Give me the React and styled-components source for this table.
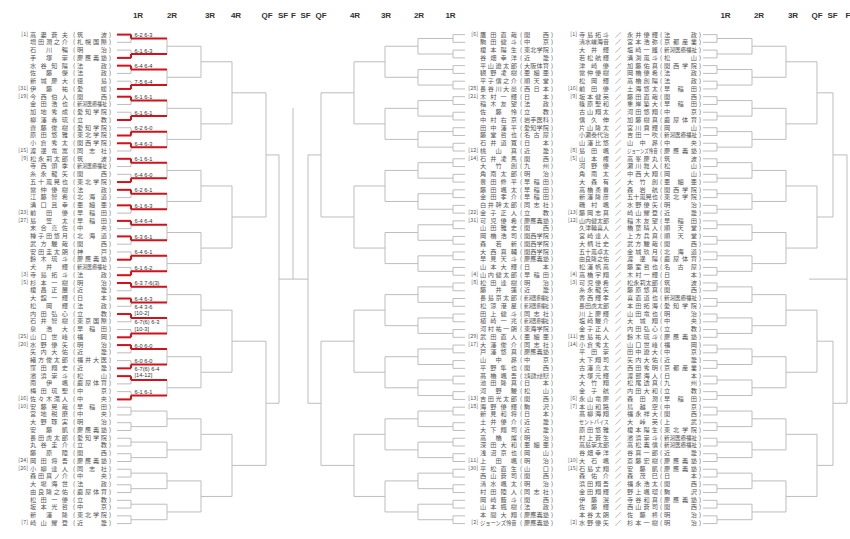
import React from 'react';
import styled, { createGlobalStyle } from 'styled-components';

const ROW = 7.762;
const TOP = 34.6;
const GREY = '#bdbdbd';
const RED = '#d0121b';
const GLYPH = 6.2;

const rowY = (i) => TOP + i * ROW;

const GlobalStyle = createGlobalStyle`
  html, body {
    margin: 0;
    padding: 0;
    background: #fff;
  }
  body {
    font-family: "Noto Sans CJK JP", "Noto Sans", sans-serif;
  }
`;

const Page = styled.div`
  display: flex;
  width: 850px;
  height: 539px;
  overflow: hidden;
  background: #fff;
`;

const NameColumn = styled.div`
  display: flex;
  flex-direction: column;
  flex-shrink: 0;
  box-sizing: border-box;
  width: ${p => p.$width}px;
  padding-top: ${TOP - ROW / 2}px;
  padding-left: ${p => p.$indent}px;
`;

const Row = styled.div`
  display: flex;
  align-items: center;
  height: ${ROW}px;
  line-height: ${ROW}px;
  font-size: ${GLYPH}px;
  color: #555;
  white-space: nowrap;
  overflow: visible;
`;

const Seed = styled.span`
  flex-shrink: 0;
  width: ${p => p.$w}px;
  margin-right: 2px;
  text-align: right;
  font-size: 5.4px;
  color: #555;
`;

const SpreadBox = styled.span`
  display: flex;
  justify-content: space-between;
  flex-shrink: 0;
  width: ${p => p.$w}px;
`;

const Squeezed = styled.span`
  display: inline-block;
  transform-origin: left center;
  transform: scaleX(${p => p.$k});
`;

const Paren = styled.span`
  flex-shrink: 0;
  width: 6px;
  margin-left: ${p => p.$lead || 0}px;
  text-align: center;
`;

const Slash = styled.span`
  flex-shrink: 0;
  width: ${p => p.$w}px;
  text-align: center;
`;

const Chart = styled.svg`
  display: block;
  flex-shrink: 0;
  font-family: "Liberation Sans", Arial, sans-serif;
`;

const Wire = styled.line`
  stroke: ${p => (p.$red ? RED : GREY)};
  stroke-width: ${p => (p.$red ? 2 : 1)};
`;

const RoundLabel = styled.text`
  font-size: 8px;
  font-weight: 700;
  fill: #333;
  text-anchor: middle;
`;

const Score = styled.text`
  font-size: 5.7px;
  fill: #333;
`;

const Spread = ({ text, w }) => {
  const chars = Array.from(text);
  const natural = chars.length * GLYPH;
  if (natural > w) {
    return (
      <SpreadBox $w={w}>
        <Squeezed $k={w / natural}>{text}</Squeezed>
      </SpreadBox>
    );
  }
  return (
    <SpreadBox $w={w}>
      {chars.map((c, i) => <span key={i}>{c}</span>)}
    </SpreadBox>
  );
};

const toSingles = (list) => list.map(([seed, name, school]) => ({ seed, name, school }));

const LEFT = toSingles([
  ['1', '高妻蒼夫', '筑波'], ['', '増田潤之介', '札幌国際'], ['', '石川暢', '明治'], ['', '手塚崇', '慶應義塾'],
  ['', '水谷知陽', '法政'], ['', '佐藤傑', '法政'], ['', '新城慶大', '徳島'], ['31', '伊藤祐', '愛媛'],
  ['19', '今西伯人', '関西'], ['', '金田浩也', '新潟医療福祉'], ['', '加地秀成', '愛知学院'], ['', '柳澤春琉', '立教'],
  ['', '齋藤俊樹', '愛知学院'], ['', '原田悠雅', '東北学院'], ['', '小倉秀太', '関西学院'], ['15', '渡邊竜嵩', '同志社'],
  ['9', '松永莉太郎', '筑波'], ['', '寺西頌季', '新潟医療福祉'], ['', '糸永龍矢', '関西'], ['', '五十嵐晃也', '東北学院'],
  ['', '當仲優樹', '法政'], ['', '江藤智希', '北海道'], ['', '溝口且幸', '亜細亜'], ['23', '前田優', '早稲田'],
  ['27', '島笠太', '早稲田'], ['', '末合亮佐', '中央'], ['', '種子田悠月', '北海道'], ['', '武方駿哉', '関西'],
  ['', '安田圭太朗', '神戸'], ['', '鈴木琉斗', '慶應義塾'], ['', '犬井輝', '新潟医療福祉'], ['3', '寺島拓斗', '法政'],
  ['5', '杉本一樹', '明治'], ['', '榎昌正展', '近畿'], ['', '大舘一輝', '日本'], ['', '松岡輝', '法政'],
  ['', '内田弘心', '立教'], ['', '石井智樹', '東京国際'], ['', '泉浩大', '早稲田'], ['25', '山口世峰', '福岡'],
  ['20', '水野優矢', '明治'], ['', '矢内大佑', '近畿'], ['', '緒方俊太郎', '福井大医'], ['', '窪田翔史', '近畿'],
  ['', '濱浜崇斗', '松山'], ['', '南伊颯', '鹿屋体育'], ['', '梅田琉聖', '中京'], ['16', '佐々木滝人', '中央'],
  ['10', '安藤晃哉', '早稲田'], ['', '宮地税磨', '中央'], ['', '大野琢実', '明治'], ['', '安藤凱', '慶應義塾'],
  ['', '長田虎太郎', '愛知学院'], ['', '丸谷圭介', '立教'], ['', '藤原陸', '関西'], ['24', '岡田将吾', '慶應義塾'],
  ['26', '小柳達人', '同志社'], ['', '森田真ノ介', '中央'], ['', '大場海世', '法政'], ['', '由良隆之佑', '鹿屋体育'],
  ['', '松田一優', '立教'], ['', '坂本光哲', '中京'], ['', '新澤隆', '東北学院'], ['7', '崎山耀登', '近畿'],
]);

const MIDDLE = toSingles([
  ['6', '鷹田直哉', '関西'], ['', '駒田健斗', '中京'], ['', '榎本陽生', '東北学院'], ['', '谷畑幸洋', '近畿'],
  ['', '平山遼太郎', '大阪体育'], ['', '観野凌樹', '亜細亜'], ['', '平子信之介', '順天堂'], ['28', '長谷川大豪', '西日本'],
  ['21', '木村一輝', '日本'], ['', '稲木友望', '法政'], ['', '佐藤怜', '立教'], ['', '中村右京', '岩手医科'],
  ['', '田中澤平', '愛知学院'], ['', '藤堂哲也', '名古屋'], ['', '石井道寛', '日本'], ['12', '桃山真', '近畿'],
  ['14', '石井凌馬', '関西'], ['', '大竹創', '九州'], ['', '角南太郎', '明治'], ['', '豊田修平', '早稲田'],
  ['', '藤田颯太', '早稲田'], ['', '金田孝介', '早稲田'], ['', '白井幹太郎', '同志社'], ['22', '金子正人', '立教'],
  ['31', '可児優希', '慶應義塾'], ['', '山田雅史', '関西'], ['', '岡橋浩司', '関西学院'], ['', '森若新', '関西学院'],
  ['', '大西真輔', '関西学院'], ['', '早見天斗', '慶應義塾'], ['', '山本大輝', '日本'], ['4', '山内健太郎', '早稲田'],
  ['8', '松田達樹', '明治'], ['', '藤井蓮', '近畿'], ['', '長島京太郎', '新潟医療福祉'], ['', '松涼港星', '新潟医療福祉'],
  ['', '田上健斗', '同志社'], ['', '植崎一兆', '新潟医療福祉'], ['', '河村祐一朗', '東海学院'], ['29', '武田直人', '亜細亜'],
  ['17', '大澤俊介', '同志社'], ['', '戸澤悠真', '慶應義塾'], ['', '山中昴', '中京'], ['', '平野隼也', '関西'],
  ['', '髙橋颯吾', '北海道教大岩見沢'], ['', '池田隆真', '日本'], ['', '河野駿', '松山'], ['13', '吉田光太郎', '関西'],
  ['18', '海野優輝', '駒沢'], ['', '新見和将', '日本'], ['', '土井優介', '近畿'], ['', '大下翔司', '近畿'],
  ['', '高橋燦', '明治'], ['', '深田大和', '亜細亜'], ['', '浅沼京也', '岡山'], ['11', '上田颯', '明治'],
  ['30', '平松直生', '山口'], ['', '西山蒼司', '関西'], ['', '清水颯太', '明治'], ['', '村田陸人', '同志社'],
  ['', '岡崎藍斗', '関西'], ['', '山本楓樹', '法政'], ['', '本間大翔', '慶應義塾'], ['2', 'ジョーンズ怜音', '慶應義塾'],
]);

const DOUBLES = [
  ['1', '寺島拓斗', '永井優輝', '法政'], ['', '清水嵯海音', '宮本浩弥', '京都産業'], ['', '大井輝', '塩崎一護', '新潟医療福祉'], ['', '若松航輝', '溝渕嵐斗', '松山'],
  ['', '津崎優', '加藤佑真', '関西学院'], ['', '當仲優樹', '岡橋優希', '法政'], ['', '松岡輝', '高橋創陽', '法政'], ['16', '前田優', '土海悠太', '早稲田'],
  ['9', '坂本健英', '藤田直哉', '関西'], ['', '篠原聖和', '重岸築大', '早稲田'], ['', '古山翔太', '河田悠翔', '中京'], ['', '信久伸', '加藤樹真', '鹿屋体育'],
  ['', '片山隆太', '宮川貢輝', '岡山'], ['', '小瀬泰代治', '吉田一吹', '新潟医療福祉'], ['', '山澤比悠', '山中昴', '中央'], ['8', '島田颯', 'ジョーンズ怜音', '慶應義塾'],
  ['5', '山本権', '高峯慶丸', '筑波'], ['', '河野優', '瀬川舞人', '松山'], ['', '角南太', '中西大翔', '岡山'], ['', '大森有', '大竹創', '亜細亜'],
  ['', '高橋勇貴', '森岩航', '関西学院'], ['', '新澤隆彦', '五十嵐晃也', '東北学院'], ['', '磯村颯', '水野優矢', '明治'], ['13', '藤岡志真', '崎山耀登', '近畿'],
  ['12', '山内健太郎', '稲木友望', '早稲田'], ['', '久津輪喜人', '橋葉晴人', '順天堂'], ['', '宮崎達人', '上方兵真', '順天堂'], ['', '大柄壮史', '武方駿哉', '関西'],
  ['', '五十嵐卓太', '金城玖月', '北海道'], ['', '由良隆之佑', '渡邊陽', '鹿屋体育'], ['', '松澤帆高', '藤室哲也', '名古屋'], ['4', '高橋宇翔', '木村一輝', '日本'],
  ['3', '可児優希', '松永莉太郎', '筑波'], ['', '糸永龍矢', '藤原悠真', '関西'], ['', '香西輝孝', '喜直道也', '新潟医療福祉'], ['', '長田虎太郎', '本田拓海', '愛知学院'],
  ['', '川上慶輝', '山田竜也', '明治'], ['', '塩崎駿介', '大城翔', '中央'], ['', '金子正人', '内田弘心', '立教'], ['11', '吉島祐人', '鈴木琉斗', '慶應義塾'],
  ['14', '小倉秀太', '山口世峰', '福岡'], ['', '平田崇', '田中遼大', '中京'], ['', '大下翔司', '矢内大佑', '近畿'], ['', '古澤亮太', '西田秀明', '京都産業'],
  ['', '大塚元輝', '渡部海人', '日本'], ['', '大竹翔', '松尾透真', '九州'], ['', '金子航', '内田大和', '立教'], ['6', '永山竜慶', '森田潤', '早稲田'],
  ['7', '本山和路', '鳥越空', '中京'], ['', '髙柳海翔', '福永祥大', '関西'], ['', 'セントバイス', '大峠英', '上武'], ['', '原田悠雅', '榎本陽生', '東北学院'],
  ['', '村上蒼生', '濱浜崇斗', '新潟医療福祉'], ['', '高島崇太郎', '高松義信', '新潟医療福祉'], ['', '谷畑幸洋', '谷真一郎', '近畿'], ['10', '大石颯', '斎藤宏樹', '慶應義塾'],
  ['15', '石島丈翔', '安藤凱', '慶應義塾'], ['', '森佑介', '森茂巳', '日本'], ['', '浜田翔吾', '福永浩太', '関西'], ['', '金田翔輝', '野上颯瑠', '駒沢'],
  ['', '伊藤滉', '寺谷和真', '慶應義塾'], ['', '佐藤輝', '西山蒼司', '関西'], ['', '本谷太朗', '佐藤柊', '明治'], ['2', '水野優矢', '杉本一樹', '明治'],
].map(([seed, first, second, school]) => ({ seed, first, second, school }));

// first-round results of the top of the left quarter: winner 0 = upper row, 1 = lower row
const RESULTS = [
  [0, ['6-2 6-3']], [1, ['6-1 6-3']], [0, ['6-4 6-4']], [1, ['7-5 6-4']],
  [0, ['6-1 6-1']], [1, ['6-1 6-1']], [1, ['6-2 6-0']], [0, ['6-4 6-3']],
  [0, ['6-1 6-1']], [1, ['6-4 6-0']], [0, ['6-2 6-1']], [0, ['6-1 6-3']],
  [0, ['6-4 6-4']], [0, ['6-3 6-1']], [1, ['6-4 6-1']], [1, ['6-1 6-2']],
  [0, ['6-3 7-6(3)']], [0, ['6-4 6-3']], [0, ['6-4 3-6', '[10-2]']], [1, ['6-7(6) 6-3', '[10-3]']],
  [0, ['6-0 6-0']], [1, ['6-0 6-0']], [0, ['6-7(6) 6-4', '[14-12]']], [1, ['6-1 6-1']],
];

// xs[0]: start of the player stub, xs[1..]: the vertical of each round, last: end of the final line
const buildWires = (rows, xs) => {
  const wires = [];
  let ys = [];
  for (let i = 0; i < rows; i++) {
    const y = rowY(i);
    wires.push({ x1: xs[0], y1: y, x2: xs[1], y2: y });
    ys.push(y);
  }
  let level = 1;
  while (ys.length > 1) {
    const vx = xs[level];
    const next = [];
    for (let i = 0; i < ys.length; i += 2) {
      const a = ys[i];
      const b = ys[i + 1];
      const m = (a + b) / 2;
      wires.push({ x1: vx, y1: a, x2: vx, y2: b });
      if (xs[level + 1] !== undefined) wires.push({ x1: vx, y1: m, x2: xs[level + 1], y2: m });
      next.push(m);
    }
    ys = next;
    level++;
  }
  return { wires, final: ys[0] };
};

const MAIN_LEFT = buildWires(64, [117, 131, 167, 201, 232, 266, 279, 293]);
const MAIN_RIGHT = buildWires(64, [465, 453, 418, 385, 354, 321, 308, 293]);
const DOUBLES_DRAW = buildWires(64, [703, 717, 752, 786, 817, 833, 847, 809]);

const MAIN_LABELS = [
  [138, '1R'], [172, '2R'], [210, '3R'], [236, '4R'], [267, 'QF'], [283, 'SF'], [293.5, 'F'],
  [305.5, 'SF'], [321, 'QF'], [355, '4R'], [386, '3R'], [419, '2R'], [450.5, '1R'],
];
const DOUBLES_LABELS = [[725.5, '1R'], [759, '2R'], [793, '3R'], [817, 'QF'], [832.5, 'SF'], [848, 'F']];

const Wires = ({ list }) => list.map((w, i) => <Wire key={i} {...w} />);

const Results = () =>
  RESULTS.map(([winner, lines], k) => {
    const top = rowY(2 * k);
    const bottom = rowY(2 * k + 1);
    const mid = (top + bottom) / 2;
    const wy = winner ? bottom : top;
    const base = lines.length > 1 ? [mid - 9, mid - 2.8] : [mid - 1.4];
    return (
      <g key={k}>
        <Wire $red x1={117} y1={wy} x2={131} y2={wy} />
        <Wire $red x1={131} y1={wy} x2={131} y2={mid} />
        <Wire $red x1={131} y1={mid} x2={167} y2={mid} />
        {lines.map((t, j) => (
          <Score key={j} x={134.5} y={base[j]}>{t}</Score>
        ))}
      </g>
    );
  });

const MainBracket = () => (
  <Chart width={351} height={539} viewBox="116 0 351 539">
    {MAIN_LABELS.map(([x, t], i) => (
      <RoundLabel key={i} x={x} y={17.5}>{t}</RoundLabel>
    ))}
    <Wires list={MAIN_LEFT.wires} />
    <Wires list={MAIN_RIGHT.wires} />
    <Wire x1={293} y1={108} x2={293} y2={MAIN_LEFT.final} />
    <Results />
  </Chart>
);

const DoublesBracket = () => (
  <Chart width={147} height={539} viewBox="703 0 147 539">
    {DOUBLES_LABELS.map(([x, t], i) => (
      <RoundLabel key={i} x={x} y={17.5}>{t}</RoundLabel>
    ))}
    <Wires list={DOUBLES_DRAW.wires} />
  </Chart>
);

const SinglesRow = ({ p, seedW, nameW, schoolW, lead }) => (
  <Row>
    <Seed $w={seedW}>{p.seed ? `[${p.seed}]` : ''}</Seed>
    <Spread text={p.name} w={nameW} />
    <Paren $lead={lead}>(</Paren>
    <Spread text={p.school} w={schoolW} />
    <Paren>)</Paren>
  </Row>
);

const DoublesRow = ({ p }) => (
  <Row>
    <Seed $w={9}>{p.seed ? `[${p.seed}]` : ''}</Seed>
    <Spread text={p.first} w={30} />
    <Slash $w={18}>／</Slash>
    <Spread text={p.second} w={31} />
    <Paren>(</Paren>
    <Spread text={p.school} w={33} />
    <Paren>)</Paren>
  </Row>
);

export default function App() {
  return (
    <>
      <GlobalStyle />
      <Page>
        <NameColumn $width={116} $indent={16}>
          {LEFT.map((p, i) => (
            <SinglesRow key={i} p={p} seedW={12} nameW={38} schoolW={30} lead={3} />
          ))}
        </NameColumn>
        <MainBracket />
        <NameColumn $width={89} $indent={0}>
          {MIDDLE.map((p, i) => (
            <SinglesRow key={i} p={p} seedW={11} nameW={37} schoolW={25} lead={1} />
          ))}
        </NameColumn>
        <NameColumn $width={147} $indent={12}>
          {DOUBLES.map((p, i) => (
            <DoublesRow key={i} p={p} />
          ))}
        </NameColumn>
        <DoublesBracket />
      </Page>
    </>
  );
}
